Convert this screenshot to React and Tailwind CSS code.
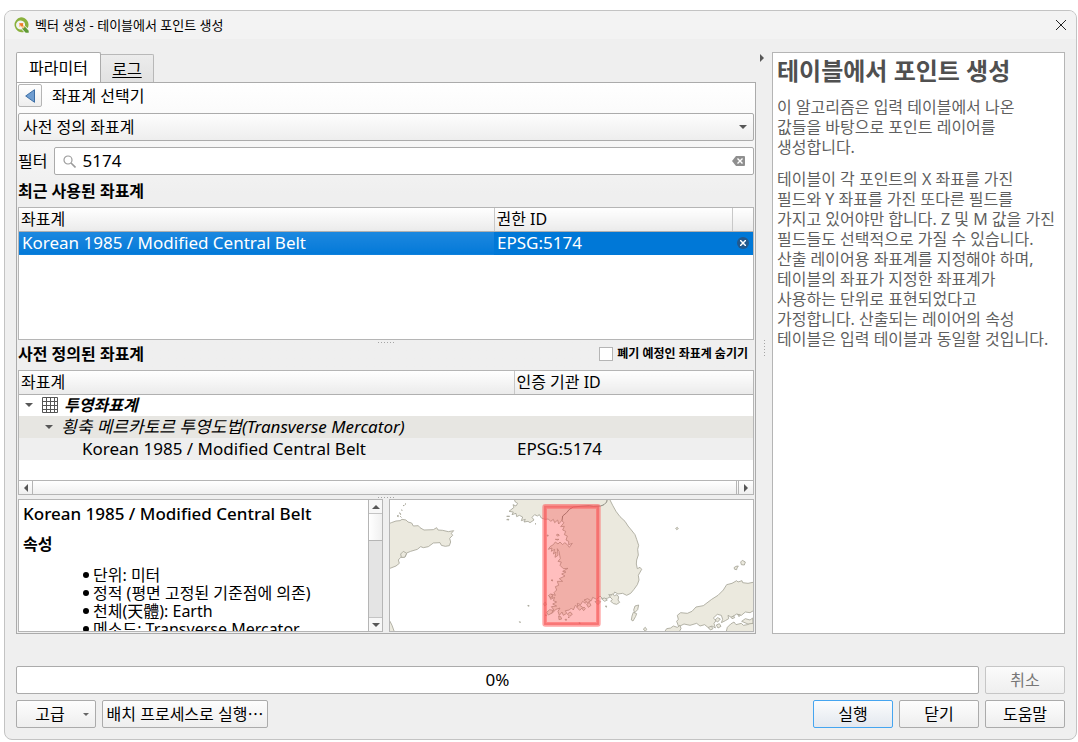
import React from "react";

const FACE = "font-['Noto_Sans','Noto_Sans_CJK_KR',sans-serif]";
const BUTTON =
  "flex h-7 items-center justify-center rounded-[2px] border border-[#ababab] bg-linear-to-b from-[#fdfdfd] to-[#eeeeee] text-base leading-5 text-black";
const HEAD_CELL =
  "h-[23px] border-b border-[#b0b0b0] bg-linear-to-b from-white to-[#ebebeb] p-0 pl-0.5 text-left text-base leading-5 font-normal";

function QgisLogo() {
  return (
    <svg viewBox="0 0 48 48" className="size-4 shrink-0" aria-hidden="true">
      <path
        fillRule="evenodd"
        d="M24 1a22.500 22.500 0 0 1 20 33l-8-8a13.500 13.500 0 1 0-11 11l8 8a22.500 22.500 0 1 1-9-44z"
        fill="#8ab13c"
      />
      <path d="M28 28h7l12 13v6h-9L28 36z" fill="#5f9a34" />
      <path d="M18 18h14l-2 5 6 6-6 6-7-7-5 2z" fill="#f7c98b" />
      <path d="M19 19h11v9h-6z" fill="#ee7a2b" />
    </svg>
  );
}

function Arrow({ dir = "down", className = "" }) {
  const d = {
    down: "M0 0h8L4 4z",
    up: "M0 4h8L4 0z",
    left: "M6 0v8L2 4z",
    right: "M2 0v8l4-4z",
  }[dir];
  const flat = dir === "down" || dir === "up";
  return (
    <svg
      viewBox={flat ? "0 0 8 4" : "0 0 8 8"}
      className={`${flat ? "h-1 w-2" : "size-2"} shrink-0 ${className}`}
      fill="#575757"
      aria-hidden="true"
    >
      <path d={d} />
    </svg>
  );
}

function Grip({ vertical = false }) {
  return (
    <svg
      viewBox={vertical ? "0 0 1 17" : "0 0 17 1"}
      className={vertical ? "h-[17px] w-px" : "h-px w-[17px]"}
      aria-hidden="true"
    >
      <path d={vertical ? "M.5 0v17" : "M0 .5h17"} stroke="#a5a5a5" strokeDasharray="1 2" />
    </svg>
  );
}

function MapPreview() {
  return (
    <svg
      viewBox="30 60 1089 393"
      preserveAspectRatio="xMidYMid slice"
      className="block h-full w-full bg-white"
      role="img"
      aria-label="Korean 1985 / Modified Central Belt"
    >
      <g fill="#ebe9de" stroke="#a6a598" strokeWidth="2.5" strokeLinejoin="round">
        <path d="M24 132L34 128 48 123 60 122 66 118 78 120 84 126 95 129 100 138 115 137 120 143 132 150 160 149 170 143 174 150 188 151 205 155 221 152 214 160 218 166 209 175 212 186 208 197 196 199 184 196 180 188 160 189 145 200 130 203 122 200 112 208 92 214 80 219 76 230 62 232 55 240 58 250 48 258 30 265 24 266Z" />
        <path d="M62 222L70 214 80 220 74 232 64 232Z" />
        <path d="M24 418L30 424 36 436 44 458H24Z" />
        <path d="M402 56L406 66 413 70 408 78 399 74 402 82 387 94 400 96 396 104 408 100 410 110 418 106 428 111 424 122 436 118 432 126 444 124 450 128 462 120 456 112 464 104 472 108 478 104 484 114 495 118 505 117 512 124 520 118 524 128 533 120 536 132 545 122 552 128 542 140 553 139 548 150 557 154 553 164 562 168 558 180 566 184 566 194 577 190 568 202 562 194 554 188 548 194 540 186 534 192 526 186 520 194 510 200 505 208 516 204 514 214 524 208 520 222 528 216 525 232 534 226 532 206 537 214 541 236 534 244 544 246 540 256 550 266 564 265 548 274 558 276 545 282 555 288 538 296 548 304 532 304 536 316 526 320 530 330 522 338 526 346 514 342 518 352 508 348 512 358 524 352 520 362 530 366 518 372 530 378 514 380 522 390 506 400 518 398 528 388 540 384 534 394 538 406 546 396 550 406 560 400 556 392 568 390 574 384 580 390 586 376 594 382 592 370 602 374 608 364 616 370 622 362 634 362 638 352 650 358 660 348 668 356 682 355 692 350 686 344 700 344 704 336 714 342 728 340 740 346 752 340 762 328 772 314 777 300 775 286 785 268 780 262 772 266 769 252 770 240 775 225 773 208 776 196 770 178 765 164 754 150 744 138 735 124 720 110 708 94 698 76 688 56Z" />
        <path d="M1124 306L1104 310 1088 308 1086 302 1074 306 1070 302 1056 310 1040 314 1030 330 1014 346 995 358 970 377 948 381 936 394 922 400 902 398 892 406 895 418 890 424 896 440 912 432 930 436 950 430 960 438 974 434 986 444 996 438 1006 444 1002 430 1008 422 1000 414 1012 403 1024 406 1028 418 1024 428 1036 422 1046 416 1044 406 1054 412 1070 402 1084 406 1096 396 1110 398 1124 390Z" />
        <path d="M852 458L860 446 872 444 880 438 892 442 900 436 903 446 896 458ZM1038 458L1042 442 1052 432 1062 426 1068 434 1084 430 1090 436 1102 434 1114 428 1124 432 1124 458Z" />
        <path d="M1085 424L1096 416 1110 420 1118 414 1119 430 1104 432Z" />
        <path d="M765 378l11-3-3 14-9 9-3-8zM760 397l10 4-3 8-8 14-5-3 2-12zM790 447l6-5 4 6-4 6zM1082 246l5-5 9 5-3 9-9-1zM1062 263l6-4 7-1-4 6-1 5-6-1zM887 145l5-3 3 4-5 3z" />
        <path d="M689 350l9-8 5 5 8-3 5 7-2 9 5 7-9 6-9-2-9-7 5-6zM664 356l10-2 8 6-8 4zM620 373l8-6 5 9-8 6zM645 365l8-4 9 4-8 9zM590 381l8-6 10 7-9 9zM612 360l11-4 9 6-9 6zM562 402l9-6 6 7-8 6zM505 347l7-5 6 4-5 7zM491 371l5-5 3 8-5 4zM500 397l9-8 10 2-3 8-11 6zM536 408l6 2 3 7-8 2zM607 387l5-6 4 5-5 6z" />
        <path d="M501 165l4 1-2 3zM529 165l5-3 4 4-5 2zM513 301l4-2 1 4zM495 406l3-2 2 3zM555 418l5 0-2 4zM564 411l3 0 0 3zM597 428l4 1-2 3zM443 377l4-1 0 3zM418 425l4 1-2 2zM676 378l4 0-1 4zM51 108l4-2 0 4zM59 98l3 6zM64 90l3 1zM69 77l4-1zM75 72l3 0zM61 109l3 3zM380 119l5-2 2 3zM380 109l9 0zM465 131l3 1zM1053 412l8-4 3 5-8 3zM1073 403l8 2-4 5zM1005 420l8-7 8 4-8 9zM1009 435l9-4 5 8-9 5zM985 442l9-3 5 7-8 4zM526 178l7 2 4-2z" />
        <path d="M546 122L548 108 560 98 568 88 580 81 600 79 628 77 640 79 662 78 672 74 680 66 682 56" fill="none" stroke="#77766c" />
      </g>
      <rect x="492" y="77" width="165" height="358" fill="#ff3b3b" fillOpacity=".33" />
      <rect x="494" y="79" width="161" height="354" rx="2" fill="none" stroke="#ff5a5a" strokeOpacity=".55" strokeWidth="14" />
      <rect x="495" y="80" width="159" height="352" fill="none" stroke="#f06060" strokeOpacity=".5" strokeWidth="5" />
    </svg>
  );
}

const properties = [
  "단위: 미터",
  "정적 (평면 고정된 기준점에 의존)",
  "천체(天體): Earth",
  "메소드: Transverse Mercator",
];

function RecentTable() {
  return (
    <div className="h-[133px] border border-[#b5b5b5] bg-white">
      <table className="w-full table-fixed border-collapse">
        <colgroup>
          <col />
          <col className="w-[238px]" />
          <col className="w-[21px]" />
        </colgroup>
        <thead>
          <tr>
            <th scope="col" className={HEAD_CELL}>좌표계</th>
            <th scope="col" className={`${HEAD_CELL} border-l border-l-[#c8c8c8]`}>권한 ID</th>
            <th scope="col" aria-label="제거" className={`${HEAD_CELL} border-l border-l-[#c8c8c8]`} />
          </tr>
        </thead>
        <tbody className="text-[17px] leading-5 text-white">
          <tr>
            <td className="h-6 bg-linear-to-b from-[#1c88df] to-[#0279d8] p-0 pl-[3px] align-middle">
              Korean 1985 / Modified Central Belt
            </td>
            <td className="bg-[#0078d7] p-0 pl-[3px]">EPSG:5174</td>
            <td className="bg-[#0078d7] p-0">
              <button aria-label="제거" className="mx-auto flex size-3 items-center justify-center rounded-full bg-[#23588c]">
                <svg viewBox="0 0 6 6" className="size-1.5" stroke="#fff" strokeWidth="1.500" aria-hidden="true">
                  <path d="M0 0l6 6M6 0L0 6" />
                </svg>
              </button>
            </td>
          </tr>
        </tbody>
      </table>
    </div>
  );
}

function PredefinedTable() {
  return (
    <div className="flex h-[125px] flex-col border border-[#b5b5b5] bg-white">
      <table className="w-full table-fixed border-collapse">
        <colgroup>
          <col />
          <col className="w-[239px]" />
        </colgroup>
        <thead>
          <tr>
            <th scope="col" className={HEAD_CELL}>좌표계</th>
            <th scope="col" className={`${HEAD_CELL} border-l border-l-[#c8c8c8]`}>인증 기관 ID</th>
          </tr>
        </thead>
        <tbody className="text-[17px] leading-5">
          <tr>
            <td className="h-[22px] p-0">
              <div className="flex items-center pl-1.5">
                <Arrow />
                <svg viewBox="0 0 16 16" className="ml-[9px] size-4" fill="none" stroke="#555" aria-hidden="true">
                  <path d="M.5 .5h15v15H.5zM4.500 0v16M8.500 0v16M12.500 0v16M0 4.500h16M0 8.500h16M0 12.500h16" />
                </svg>
                <span className="ml-1.5 text-base leading-5 font-bold italic">투영좌표계</span>
              </div>
            </td>
            <td />
          </tr>
          <tr className="bg-[#e7e6e2]">
            <td className="h-[22px] p-0">
              <div className="flex items-center pl-[26px]">
                <Arrow />
                <span className="ml-2 whitespace-nowrap italic">횡축 메르카토르 투영도법(Transverse Mercator)</span>
              </div>
            </td>
            <td />
          </tr>
          <tr className="bg-[#efefef]">
            <td className="h-[22px] p-0 pl-[63px]">Korean 1985 / Modified Central Belt</td>
            <td className="p-0 pl-[3px]">EPSG:5174</td>
          </tr>
        </tbody>
      </table>
      <div className="mt-auto flex h-3.5 border-t border-[#b5b5b5] bg-linear-to-b from-white to-[#f0f0f0]">
        <button aria-label="왼쪽으로" className="flex w-3.5 items-center justify-center border-r border-[#b5b5b5]">
          <Arrow dir="left" />
        </button>
        <div className="flex-1 border-r border-[#b5b5b5]" />
        <button aria-label="오른쪽으로" className="ml-px flex w-[15px] items-center justify-center border-l border-[#b5b5b5]">
          <Arrow dir="right" />
        </button>
      </div>
    </div>
  );
}

export default function App() {
  return (
    <div className={`${FACE} min-h-screen bg-white pt-2.5 pr-px pb-0.5 pl-1 text-base leading-5 text-black`}>
      <div className="overflow-hidden rounded-lg border border-[#c3c3c3] bg-[#efefef]">
        <header className="flex h-7 items-center gap-1.5 bg-[#f3f3f3] pr-[9px] pl-2">
          <QgisLogo />
          <h1 className="flex-1 text-[13px] leading-4">벡터 생성 - 테이블에서 포인트 생성</h1>
          <button aria-label="닫기" className="flex size-3 items-center justify-center">
            <svg viewBox="0 0 12 12" className="size-3" stroke="#222" aria-hidden="true">
              <path d="M1 1l10 10M11 1L1 11" />
            </svg>
          </button>
        </header>

        <main className="px-[11px] pt-[13px] pb-[11px]">
          <div className="flex">
            <section className="flex min-w-0 flex-1 flex-col">
              <div role="tablist" className="flex h-[30px] items-end">
                <button
                  role="tab"
                  aria-selected="true"
                  className="h-[30px] w-[85px] rounded-t-[2px] border border-b-0 border-[#ababab] bg-white leading-5"
                >
                  파라미터
                </button>
                <button
                  role="tab"
                  aria-selected="false"
                  className="h-7 w-[53px] rounded-tr-[2px] border border-b-0 border-l-0 border-[#b8b8b8] bg-linear-to-b from-[#ececec] to-[#e2e2e2] leading-5 underline underline-offset-2"
                >
                  로그
                </button>
              </div>

              <div className="border border-[#ababab] bg-linear-to-b from-white to-[#efefef] to-[110px] p-px">
                <div className="flex h-[23px] items-center gap-2.5">
                  <button aria-label="뒤로" className="flex h-[23px] w-6 items-center justify-center rounded-[2px] border border-[#b5b5b5] bg-linear-to-b from-white to-[#eeeeee]">
                    <svg viewBox="0 0 10 14" className="h-3.5 w-2.5" aria-hidden="true">
                      <path d="M9.500 .7v12.600L.7 7z" fill="#6f9dd0" stroke="#3c6ea5" />
                    </svg>
                  </button>
                  <h2>좌표계 선택기</h2>
                </div>

                <div className="relative mt-1.5">
                  <select
                    aria-label="좌표계 유형"
                    className="block h-7 w-full appearance-none rounded-[2px] border border-[#ababab] bg-linear-to-b from-[#fdfdfd] to-[#eeeeee] px-1 leading-5"
                  >
                    <option>사전 정의 좌표계</option>
                  </select>
                  <Arrow className="pointer-events-none absolute top-3 right-[7px]" />
                </div>

                <div className="mt-1.5 flex items-center gap-[7px]">
                  <label htmlFor="filter" className="shrink-0">필터</label>
                  <div className="flex h-7 flex-1 items-center rounded-[2px] border border-[#ababab] bg-white pr-2 pl-2">
                    <svg viewBox="0 0 13 13" className="size-[13px]" fill="none" stroke="#9b9b9b" aria-hidden="true">
                      <circle cx="5" cy="5" r="4" strokeWidth="1.200" />
                      <path d="M8 8l4.500 4.500" strokeWidth="1.600" />
                    </svg>
                    <input id="filter" defaultValue="5174" className="ml-1.5 min-w-0 flex-1 bg-transparent text-[17px] leading-5 outline-none" />
                    <button aria-label="지우기">
                      <svg viewBox="0 0 13 10" className="h-2.5 w-[13px]" aria-hidden="true">
                        <path d="M4 0h8q1 0 1 1v8q0 1-1 1H4L0 5z" fill="#8f8f8f" />
                        <path d="M5.500 2.500l5 5M10.500 2.500l-5 5" stroke="#fff" strokeWidth="1.400" />
                      </svg>
                    </button>
                  </div>
                </div>

                <h3 className="flex h-8 items-center font-semibold">최근 사용된 좌표계</h3>
                <RecentTable />
                <div className="flex h-1 items-center justify-center"><Grip /></div>

                <div className="flex h-[26px] items-center justify-between pb-1.5">
                  <h3 className="font-semibold">사전 정의된 좌표계</h3>
                  <label className="flex items-center gap-1 pr-1.5 text-xs leading-4 font-semibold">
                    <input type="checkbox" className="size-3.5 appearance-none border border-[#b5b5b5] bg-white" />
                    폐기 예정인 좌표계 숨기기
                  </label>
                </div>
                <PredefinedTable />
                <div className="flex h-1 items-center justify-center"><Grip /></div>

                <div className="flex h-[133px] gap-1.5">
                  <div className="flex min-w-0 flex-1 border border-[#b5b5b5] bg-white">
                    <div className="min-w-0 flex-1 overflow-hidden pt-1 pl-1">
                      <h3 className="text-[17px] leading-5 font-medium whitespace-nowrap">Korean 1985 / Modified Central Belt</h3>
                      <h4 className="mt-2.5 font-semibold">속성</h4>
                      <ul className="mt-3 pl-[60px] leading-[18px]">
                        {properties.map((p) => (
                          <li key={p} className="flex h-[18px] items-center gap-1 whitespace-nowrap">
                            <span className="size-1.5 shrink-0 rounded-full bg-black" />
                            {p}
                          </li>
                        ))}
                      </ul>
                    </div>
                    <div className="flex w-3.5 flex-col border-l border-[#b5b5b5] bg-[#e4e4e4]">
                      <button aria-label="위로" className="flex h-3.5 items-center justify-center border-b border-[#c4c4c4] bg-[#f7f7f7]">
                        <Arrow dir="up" />
                      </button>
                      <div className="h-[27px] border-b border-[#b5b5b5] bg-linear-to-r from-white to-[#f0f0f0]" />
                      <button aria-label="아래로" className="mt-auto flex h-3.5 items-center justify-center border-t border-[#c4c4c4] bg-[#f7f7f7]">
                        <Arrow />
                      </button>
                    </div>
                  </div>
                  <div className="min-w-0 flex-1 border border-[#b5b5b5] bg-white">
                    <MapPreview />
                  </div>
                </div>
              </div>
            </section>

            <div className="flex w-4 shrink-0 flex-col items-center pt-0.5">
              <button aria-label="도움말 접기"><Arrow dir="right" className="mr-1" /></button>
              <div className="my-auto"><Grip vertical /></div>
            </div>

            <aside className="w-[293px] shrink-0 border border-[#b5b5b5] bg-white px-1 py-1 break-keep text-[#5f5f5f]">
              <h2 className="text-2xl leading-7 font-bold text-[#505050]">테이블에서 포인트 생성</h2>
              <p className="mt-3">
                이 알고리즘은 입력 테이블에서 나온
                <br />값들을 바탕으로 포인트 레이어를
                <br />생성합니다.
              </p>
              <p className="mt-3 whitespace-nowrap">
                테이블이 각 포인트의 X 좌표를 가진
                <br />필드와 Y 좌표를 가진 또다른 필드를
                <br />가지고 있어야만 합니다. Z 및 M 값을 가진
                <br />필드들도 선택적으로 가질 수 있습니다.
                <br />산출 레이어용 좌표계를 지정해야 하며,
                <br />테이블의 좌표가 지정한 좌표계가
                <br />사용하는 단위로 표현되었다고
                <br />가정합니다. 산출되는 레이어의 속성
                <br />테이블은 입력 테이블과 동일할 것입니다.
              </p>
            </aside>
          </div>

          <div className="mt-8 flex gap-1.5">
            <div
              role="progressbar"
              aria-label="진행률"
              aria-valuenow={0}
              aria-valuemin={0}
              aria-valuemax={100}
              className="flex h-7 flex-1 items-center justify-center rounded-[2px] border border-[#ababab] bg-white text-[17px] leading-5"
            >
              0%
            </div>
            <button disabled className="h-7 w-20 rounded-[2px] border border-[#c6c6c6] bg-linear-to-b from-[#fbfbfb] to-[#efefef] leading-5 text-[#777]">
              취소
            </button>
          </div>

          <div className="mt-1.5 flex gap-1.5">
            <button className={`${BUTTON} w-20 gap-[18px] pl-3`}>
              고급
              <svg viewBox="0 0 8 4" className="h-[3px] w-1.5" fill="#666" aria-hidden="true"><path d="M0 0h8L4 4z" /></svg>
            </button>
            <button className={`${BUTTON} mr-auto w-[166px] whitespace-nowrap`}>배치 프로세스로 실행⋯</button>
            <button className="h-7 w-20 rounded-[2px] border border-[#45a5f0] bg-linear-to-b from-[#fbfcfd] to-[#e3e8ef] leading-5">
              실행
            </button>
            <button className={`${BUTTON} w-20`}>닫기</button>
            <button className={`${BUTTON} w-20`}>도움말</button>
          </div>
        </main>
      </div>
    </div>
  );
}
